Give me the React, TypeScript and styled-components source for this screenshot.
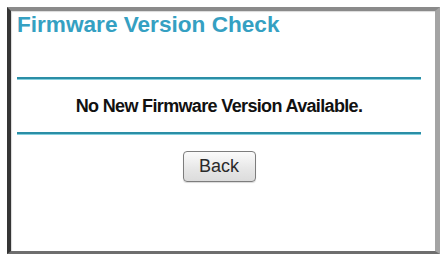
import React from "react";
import styled, { createGlobalStyle } from "styled-components";

const Global = createGlobalStyle`
  html, body { margin: 0; padding: 0; background: #ffffff; }
  body { font-family: "Liberation Sans", Arial, sans-serif; }
`;

const Frame = styled.div`
  box-sizing: border-box;
  margin: 7px 0 0 7px;
  width: 433px;
  height: 247px;
  background: #ffffff;
  border-style: solid;
  border-width: 4px 5px 3px 4px;
  border-color: #8a8a8a #a4a4a4 #6e6e6e #353535;
  box-shadow: inset 1px 1px 1px rgba(0, 0, 0, 0.15);
  padding: 1px 14px 0 6px;
  display: flex;
  flex-direction: column;
`;

const Title = styled.h1`
  margin: 0;
  font-family: "Liberation Sans", Arial, sans-serif;
  font-weight: bold;
  font-size: 22.6px;
  line-height: 25px;
  color: #35a0c2;
`;

const Rule = styled.div<{ $top: number }>`
  margin-top: ${(p) => p.$top}px;
  height: 2px;
  background: #2b8ea6;
  box-shadow: 0 1px 0 #86d0de;
`;

const Message = styled.p`
  margin: 17px 0 0;
  text-align: center;
  font-family: "Liberation Sans", Arial, sans-serif;
  font-weight: bold;
  font-size: 18px;
  letter-spacing: -0.65px;
  line-height: 21px;
  color: #111111;
`;

const ButtonRow = styled.div`
  display: flex;
  justify-content: center;
  margin-top: 17px;
`;

const Button = styled.button`
  box-sizing: border-box;
  width: 73px;
  height: 31px;
  padding: 0;
  border: 1px solid #7d7d7d;
  border-radius: 4px;
  background: linear-gradient(#fbfbfb, #e6e6e6 60%, #dcdcdc);
  box-shadow: 0 1px 1px rgba(0, 0, 0, 0.15);
  font-family: "Liberation Sans", Arial, sans-serif;
  font-size: 18px;
  color: #2a2a2a;
`;

export default function App() {
  return (
    <>
      <Global />
      <Frame>
        <Title>Firmware Version Check</Title>
        <Rule $top={40} />
        <Message>No New Firmware Version Available.</Message>
        <Rule $top={15} />
        <ButtonRow>
          <Button type="button">Back</Button>
        </ButtonRow>
      </Frame>
    </>
  );
}
